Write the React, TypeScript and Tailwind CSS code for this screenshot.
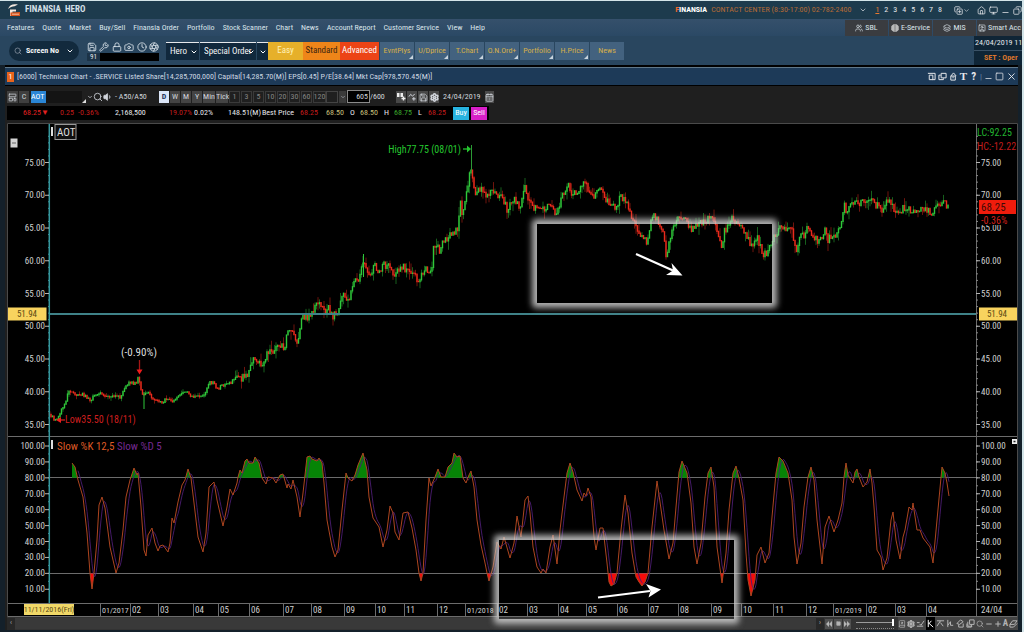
import type { ReactNode } from "react";
import {
  Aperture, BookUser, CalendarDays, Camera, ChevronDown, Clock, Copy, CopyPlus, House, Layers,
  LayoutTemplate, Lock, Minus, Monitor, Plus, Save, Search, Settings, Square, SquareUser, Users, Volume1, Wrench, X,
} from "lucide-react";

type Point = [number, number];

const toPoints = (flat: number[]): Point[] => {
  const out: Point[] = [];
  for (let i = 0; i < flat.length; i += 2) out.push([flat[i], flat[i + 1]]);
  return out;
};

const sample = (pts: Point[], x: number) => {
  let i = 1;
  while (i < pts.length - 1 && pts[i][0] < x) i++;
  const [x0, y0] = pts[i - 1];
  const [x1, y1] = pts[i];
  const t = Math.min(1, Math.max(0, (x - x0) / (x1 - x0)));
  return y0 + (y1 - y0) * t;
};

const pricePath = toPoints([
  49, 411, 51, 416, 53, 417, 57, 421, 59, 416, 62, 410, 67, 400, 69, 389, 72, 392, 78, 396, 83, 394, 91, 400, 95, 396,
  100, 393, 107, 397, 121, 397, 125, 388, 130, 383, 137, 383, 139, 377, 141, 387, 143, 394, 145, 396, 148, 392, 153, 399,
  163, 403, 167, 398, 172, 402, 177, 398, 183, 392, 188, 391, 193, 397, 200, 397, 207, 392, 210, 382, 215, 383, 218, 389,
  227, 383, 232, 383, 235, 379, 245, 377, 250, 372, 254, 359, 258, 365, 266, 364, 268, 350, 273, 352, 280, 345, 286, 348,
  288, 330, 293, 332, 298, 342, 303, 317, 310, 317, 319, 300, 323, 308, 327, 313, 329, 307, 333, 318, 337, 311, 340, 312,
  342, 295, 350, 298, 355, 283, 361, 277, 363, 257, 365, 264, 368, 273, 373, 273, 375, 265, 380, 272, 384, 265, 392, 267,
  395, 275, 404, 265, 408, 273, 413, 271, 418, 281, 423, 276, 427, 267, 432, 275, 434, 250, 437, 245, 441, 253, 443, 242,
  448, 240, 453, 233, 459, 229, 461, 203, 463, 215, 467, 192, 469, 183, 471, 168, 473, 177, 476, 198, 479, 188, 487, 194,
  493, 192, 500, 196, 505, 202, 508, 211, 513, 198, 518, 202, 521, 210, 525, 183, 528, 197, 535, 208, 547, 208, 549, 205,
  555, 212, 557, 217, 562, 200, 568, 183, 572, 195, 578, 192, 585, 184, 589, 188, 594, 197, 599, 186, 603, 193, 610, 203,
  616, 208, 622, 196, 627, 203, 633, 217, 638, 228, 647, 243, 653, 217, 657, 217, 660, 228, 664, 230, 666, 252, 668, 255,
  670, 240, 675, 223, 680, 217, 687, 222, 694, 230, 702, 222, 713, 217, 718, 230, 722, 250, 725, 232, 733, 217, 740, 227,
  747, 235, 753, 247, 758, 237, 763, 253, 767, 255, 772, 242, 777, 233, 782, 225, 787, 228, 792, 228, 795, 240, 797, 252,
  800, 238, 805, 235, 808, 223, 813, 235, 820, 243, 826, 228, 828, 242, 832, 235, 838, 235, 842, 222, 845, 205, 848, 215,
  852, 203, 860, 205, 865, 200, 872, 197, 877, 208, 880, 202, 883, 213, 886, 203, 891, 202, 895, 210, 898, 215, 903, 209,
  908, 208, 909, 203, 912, 213, 917, 209, 927, 211, 933, 213, 937, 208, 943, 202, 948, 206,
]);

const slowK = toPoints([
  72, 463, 75, 467, 78, 480, 83, 497, 87, 533, 90, 573, 92, 589, 94, 573, 97, 540, 99, 505, 102, 497, 105, 508, 110, 547,
  116, 573, 119, 563, 123, 530, 126, 497, 130, 480, 134, 468, 137, 475, 138, 473, 141, 507, 144, 550, 146, 556, 148, 535,
  152, 528, 155, 543, 158, 551, 160, 546, 163, 545, 168, 552, 170, 543, 172, 518, 174, 523, 178, 502, 182, 485, 185, 480,
  188, 469, 191, 478, 194, 503, 198, 537, 203, 552, 206, 533, 209, 487, 214, 482, 217, 500, 223, 526, 227, 507, 230, 489,
  233, 495, 237, 483, 238, 477, 240, 470, 242, 473, 245, 461, 247, 459, 249, 463, 253, 463, 255, 457, 259, 463, 262, 478,
  266, 484, 268, 477, 273, 478, 276, 483, 280, 475, 283, 474, 287, 488, 288, 484, 291, 489, 293, 480, 297, 497, 300, 517,
  303, 493, 307, 457, 310, 456, 312, 459, 317, 461, 319, 458, 322, 463, 324, 483, 327, 520, 332, 547, 335, 557, 338, 550,
  342, 510, 346, 473, 348, 478, 352, 481, 355, 475, 358, 465, 363, 453, 367, 470, 369, 497, 373, 518, 379, 527, 383, 547,
  387, 530, 390, 506, 393, 513, 395, 532, 399, 540, 403, 513, 408, 512, 412, 528, 416, 550, 419, 573, 421, 581, 423, 573,
  426, 520, 429, 478, 431, 486, 435, 477, 438, 469, 441, 477, 445, 477, 448, 467, 452, 463, 454, 453, 457, 457, 460, 456,
  463, 478, 466, 483, 469, 475, 471, 471, 474, 487, 477, 520, 481, 545, 485, 563, 487, 573, 489, 581, 493, 567, 497, 542,
  501, 549, 504, 537, 510, 558, 514, 543, 517, 516, 521, 537, 525, 500, 528, 496, 530, 513, 533, 547, 537, 567, 541, 573,
  543, 569, 546, 573, 550, 547, 553, 535, 557, 564, 560, 530, 564, 497, 567, 473, 570, 463, 573, 472, 577, 490, 582, 501,
  584, 493, 586, 496, 588, 488, 591, 497, 594, 537, 596, 550, 600, 528, 603, 528, 607, 563, 609, 582, 611, 586, 614, 584,
  617, 573, 621, 530, 625, 495, 628, 513, 632, 553, 636, 577, 639, 582, 642, 586, 645, 582, 648, 573, 652, 527, 657, 481,
  660, 502, 664, 530, 669, 559, 673, 543, 676, 507, 679, 472, 682, 461, 687, 473, 691, 503, 694, 547, 697, 564, 701, 543,
  705, 497, 708, 473, 711, 467, 714, 487, 717, 547, 722, 583, 726, 553, 729, 510, 733, 473, 736, 466, 739, 478, 743, 500,
  746, 553, 748, 580, 751, 596, 755, 580, 757, 555, 761, 547, 765, 563, 769, 553, 772, 517, 776, 473, 779, 457, 783, 461,
  788, 473, 792, 500, 794, 537, 797, 564, 801, 543, 804, 507, 808, 477, 811, 467, 814, 480, 817, 520, 822, 564, 825, 527,
  829, 516, 834, 532, 838, 520, 842, 503, 844, 477, 846, 463, 848, 475, 853, 483, 855, 472, 857, 469, 859, 477, 863, 487,
  867, 482, 870, 469, 872, 483, 874, 507, 877, 550, 881, 557, 883, 570, 887, 558, 891, 520, 893, 512, 896, 540, 900, 559,
  903, 537, 905, 530, 909, 507, 912, 510, 913, 503, 917, 530, 920, 530, 923, 538, 930, 547, 933, 563, 937, 520, 942, 467,
  945, 473, 947, 483, 949, 496,
]);

// %D trails %K as a simple moving average
const slowD: Point[] = [];
for (let x = 78; x <= 949; x += 1) {
  let sum = 0;
  for (let k = 0; k < 6; k++) sum += sample(slowK, x - k);
  slowD.push([x, sum / 6]);
}

const noise = (i: number) => {
  const v = Math.sin(i * 127.1 + 11.7) * 43758.5453;
  return v - Math.floor(v);
};

const candles = Array.from({ length: 600 }, (_, i) => {
  const x = 49.5 + i * 1.5;
  const wobble = x > 235 ? 7 : 3;
  const open = sample(pricePath, x - 0.75) + (noise(i) - 0.5) * wobble;
  const close = sample(pricePath, x + 0.75) + (noise(i + 1) - 0.5) * wobble;
  const top = Math.min(open, close);
  const bottom = Math.max(open, close);
  return {
    x,
    up: close <= open,
    top: top - 0.6,
    bottom: bottom + 0.6,
    high: top - noise(i + 900) ** 3 * wobble * 1.3,
    low: bottom + noise(i + 1900) ** 3 * wobble * 1.3,
  };
});

const prices = [75, 70, 65, 60, 55, 50, 45, 40, 35];
const levels = [100, 90, 80, 70, 60, 50, 40, 30, 20, 10];
const priceY = (p: number) => 162.5 + (75 - p) * 6.55;
const levelY = (l: number) => 446 + (100 - l) * 1.592;

const months: [number, string][] = [
  [100, "01/2017"], [130, "02"], [158, "03"], [193, "04"], [218, "05"], [249, "06"], [283, "07"], [311, "08"],
  [344, "09"], [375, "10"], [404, "11"], [437, "12"], [465, "01/2018"], [497, "02"], [527, "03"], [558, "04"],
  [586, "05"], [617, "06"], [648, "07"], [678, "08"], [711, "09"], [741, "10"], [773, "11"], [806, "12"],
  [833, "01/2019"], [866, "02"], [895, "03"], [926, "04"],
];

const menuItems = [
  "Features", "Quote", "Market", "Buy/Sell", "Finansia Order", "Portfolio", "Stock Scanner", "Chart", "News",
  "Account Report", "Customer Service", "View", "Help",
];
const shortcuts = ["EvntPlys", "U/Dprice", "T.Chart", "O.N.Ord+", "Portfolio", "H.Price", "News"];
const periods = ["D", "W", "M", "Y", "Min", "Tick"];
const intervals = ["1", "3", "5", "10", "20", "30", "60", "120"];

function IconButton({ label, className = "", children }: { label: string; className?: string; children: ReactNode }) {
  return (
    <button type="button" aria-label={label} className={`flex shrink-0 items-center justify-center ${className}`}>
      {children}
    </button>
  );
}

// small line glyphs on a 10x10 grid
function Glyph({ d }: { d: string }) {
  return (
    <svg viewBox="0 0 10 10" className="h-[9px] w-[9px]" fill="none" stroke="currentColor" strokeWidth="1.1" aria-hidden>
      <path d={d} />
    </svg>
  );
}

function Ticks({ x1, x2 }: { x1: number; x2: number }) {
  return (
    <g stroke="#b4b4b4" strokeWidth="1">
      {prices.map((p) => <line key={p} x1={x1} x2={x2} y1={priceY(p)} y2={priceY(p)} />)}
      {levels.map((l) => <line key={l} x1={x1} x2={x2} y1={levelY(l)} y2={levelY(l)} />)}
    </g>
  );
}

function MinorTicks({ x, color }: { x: number; color: string }) {
  return (
    <g stroke={color} strokeWidth="1">
      {Array.from({ length: 46 }, (_, i) => <line key={i} x1={x} x2={x + 2} y1={priceY(79 - i)} y2={priceY(79 - i)} />)}
      {Array.from({ length: 19 }, (_, i) => <line key={i} x1={x} x2={x + 2} y1={levelY(100 - i * 5)} y2={levelY(100 - i * 5)} />)}
    </g>
  );
}

function Highlight({ id, x, y, width, height }: { id: string; x: number; y: number; width: number; height: number }) {
  return (
    <g>
      <mask id={id} maskUnits="userSpaceOnUse" x={x - 30} y={y - 30} width={width + 60} height={height + 60}>
        <rect x={x - 30} y={y - 30} width={width + 60} height={height + 60} fill="#fff" />
        <rect x={x} y={y} width={width} height={height} fill="#000" />
      </mask>
      <g mask={`url(#${id})`}>
        <rect
          x={x - 5} y={y - 5} width={width + 10} height={height + 10} rx="4"
          fill="#d0d0d0" fillOpacity="0.85" filter="url(#glow)"
        />
      </g>
    </g>
  );
}

function Chart() {
  const kLine = slowK.map((p) => p.join(",")).join(" ");
  const dLine = slowD.map((p) => p.join(",")).join(" ");
  return (
    <svg
      viewBox="7 123 1011 494"
      className="pointer-events-none relative z-10 block h-auto w-full overflow-visible font-['Roboto_Condensed','Liberation_Sans',sans-serif]"
      role="img"
      aria-label="AOT price chart"
    >
      <defs>
        <filter id="glow" x="-20%" y="-40%" width="140%" height="180%">
          <feGaussianBlur stdDeviation="3.2" />
        </filter>
        <clipPath id="overbought"><rect x="50" y="438" width="926" height="39.8" /></clipPath>
        <clipPath id="oversold"><rect x="50" y="573.4" width="926" height="28" /></clipPath>
      </defs>
      <rect x="7" y="123" width="1011" height="494" fill="#000" />
      <path d="M7.500 617V123.500H1017.500V617" fill="none" stroke="#4a4a4a" />
      <g stroke="#6c6c6c">
        <line x1="8" x2="1017" y1="436.500" y2="436.500" />
        <line x1="8" x2="1017" y1="603.500" y2="603.500" />
        <line x1="8" x2="1017" y1="616.500" y2="616.500" />
        <line x1="50" x2="976" y1="477.500" y2="477.500" />
        <line x1="50" x2="976" y1="573.500" y2="573.500" />
        <line x1="976.500" x2="976.500" y1="124" y2="616" />
        {months.map(([x]) => <line key={x} x1={x + 0.5} x2={x + 0.5} y1="603" y2="616" />)}
      </g>

      {/* price series */}
      {candles.map((c) => (
        <g key={c.x} stroke={c.up ? "#2fc83a" : "#ea2a1c"}>
          <line x1={c.x} x2={c.x} y1={c.high} y2={c.low} strokeWidth="0.8" strokeOpacity="0.6" />
          <line x1={c.x} x2={c.x} y1={c.top} y2={c.bottom} strokeWidth="1.4" />
        </g>
      ))}
      <line x1="471.500" x2="471.500" y1="145" y2="170" stroke="#2b9a35" />
      <line x1="144" x2="144" y1="392" y2="409" stroke="#2fc83a" />
      <line x1="363.500" x2="363.500" y1="254" y2="277" stroke="#2fc83a" />
      <line x1="50" x2="976" y1="314" y2="314" stroke="#3f8288" strokeWidth="2" />
      <line x1="49.300" x2="49.300" y1="124" y2="603" stroke="#35969c" strokeWidth="1.500" />
      <MinorTicks x={48} color="#35969c" />
      <MinorTicks x={976} color="#888" />
      <Ticks x1={45} x2={49} />
      <Ticks x1={976} x2={980} />

      {/* oscillator */}
      <polygon points={`72,478 ${kLine} 949,478`} fill="#068406" clipPath="url(#overbought)" />
      <polygon points={`72,573 ${kLine} 949,573`} fill="#f60a0a" clipPath="url(#oversold)" />
      <polyline points={dLine} fill="none" stroke="#4c1d72" strokeWidth="0.9" />
      <polyline points={kLine} fill="none" stroke="#ad451f" strokeWidth="1" />

      {/* axis values */}
      <g fill="#d0d0d0" fontSize="9">
        {prices.map((p) => (
          <g key={p}>
            <text x="45" y={priceY(p) + 3} textAnchor="end">{p.toFixed(2)}</text>
            <text x="981" y={priceY(p) + 3}>{p.toFixed(2)}</text>
          </g>
        ))}
        {levels.map((l) => (
          <g key={l}>
            <text x="45" y={levelY(l) + 3} textAnchor="end">{l.toFixed(2)}</text>
            <text x="981" y={levelY(l) + 3}>{l.toFixed(2)}</text>
          </g>
        ))}
        {months.map(([x, label]) => <text key={x} x={x + 2} y="613" fontSize={label.length > 2 ? 8 : 9}>{label}</text>)}
        <text x="981" y="613">24/04</text>
      </g>
      <rect x="8" y="307.500" width="38.500" height="13" fill="#f8d35e" />
      <rect x="979" y="307.500" width="38" height="13" fill="#f8d35e" />
      <rect x="24" y="604" width="50" height="11" fill="#f1d868" />
      <g fill="#5a4a14" fontSize="9" textAnchor="middle">
        <text x="27" y="317">51.94</text>
        <text x="997" y="317">51.94</text>
        <text x="49" y="612" fontSize="8">11/11/2016(Fri)</text>
      </g>
      <rect x="979" y="200" width="37" height="14" fill="#f01c0c" />
      <rect x="979" y="215" width="37" height="10" fill="#000" />
      <g fontSize="11">
        <text x="981" y="211" fill="#3c0a06">68.25</text>
        <text x="981" y="224" fontSize="10" fill="#d0201a">-0.36%</text>
        <text x="977" y="136" fontSize="10" fill="#22b530">LC:92.25</text>
        <text x="977" y="150" fontSize="10" fill="#c01c1c">HC:-12.22</text>
        <rect x="55" y="124.500" width="21" height="15" fill="#101010" stroke="#999" />
        <text x="57" y="136" fill="#ddd">AOT</text>
        <text x="461" y="153" fontSize="10" fill="#25c72f" textAnchor="end">High77.75 (08/01)</text>
        <text x="139" y="356" fill="#ddd" textAnchor="middle">(-0.90%)</text>
        <text x="65" y="423" fontSize="10" fill="#cf1f1f">Low35.50 (18/11)</text>
        <text x="57" y="450" fill="#dd5a26">Slow %K 12,5</text>
        <text x="117" y="450" fill="#752a92">Slow %D 5</text>
      </g>
      <rect x="51" y="127" width="2" height="9" fill="#ddd" />
      <rect x="51" y="440" width="2" height="9" fill="#ddd" />
      <rect x="10.500" y="138.500" width="7" height="9" fill="#d4d4d4" />
      <path d="M12 143h4" stroke="#666" />
      <rect x="1012" y="439" width="5" height="5" fill="#eee" />
      <path d="M1013.500 441.500h2" stroke="#222" strokeWidth="1.500" />
      <path d="M463 149h4" stroke="#25c72f" strokeWidth="1.300" />
      <path d="M467 145.500l4 3.500-4 3.500z" fill="#25c72f" />
      <path d="M139.500 360v11" stroke="#a51616" strokeWidth="1.300" />
      <path d="M136.500 369.500h6l-3 5z" fill="#ee1c1c" />
      <path d="M60 420h5" stroke="#cf1f1f" strokeWidth="1.300" />
      <path d="M56 420l5-3v6z" fill="#ee1c1c" />

      <Highlight id="upper-box" x={537} y={224} width={235} height={79} />
      <Highlight id="lower-box" x={499} y={540} width={235} height={79} />
      <path d="M636 254L673 270.500" stroke="#fff" strokeWidth="2.200" />
      <path d="M671.500 263L682.500 275.500L666 275L673 270.500Z" fill="#fff" />
      <path d="M598 597.500L650 591" stroke="#fff" strokeWidth="2.200" />
      <path d="M646 584L661 589.500L648.500 597.500L650.500 591Z" fill="#fff" />
    </svg>
  );
}

function TitleBar() {
  return (
    <header className="flex h-[18px] items-center bg-[#1d3b4d] pl-[7px]">
      <svg viewBox="0 0 14 14" className="h-[14px] w-[14px]" aria-hidden>
        <path d="M1 6C3 1.500 6 .6 11 1.600L7.500 3.200C5 3.200 3.500 4.200 1 6Z" fill="#f3e8e0" />
        <path d="M3 6.500H9V8.500H5.500V13H3Z" fill="#f3e8e0" />
        <path d="M3.500 9.500L13 9V13H3.500Z" fill="#d9541c" />
        <path d="M5 11.200h7" stroke="#f7d8c4" strokeWidth=".8" />
      </svg>
      <h1 className="ml-1 flex-1 text-[9px] font-bold text-[#d3dfe5]">FINANSIA&nbsp; HERO</h1>
      <div className="flex items-center text-[8px]">
        <span className="font-bold text-white"><span className="text-[#ef6a2c]">F</span>INANSIA</span>
        <span className="ml-1 text-[#b56a35]">CONTACT CENTER (8:30-17:00) 02-782-2400</span>
        <IconButton label="Contacts" className="mx-2"><ChevronDown size={8} className="text-gray-200" /></IconButton>
        <div className="flex gap-[5px] text-gray-200">
          <a href="#1" className="text-[#e8792e] underline">1</a>
          {["2", "3", "4", "5", "6", "7", "8"].map((n) => <a key={n} href={`#${n}`}>{n}</a>)}
        </div>
        <div className="ml-3 flex items-center gap-[3px] text-gray-200">
          <IconButton label="Windows"><CopyPlus size={9} /><ChevronDown size={7} /></IconButton>
          <IconButton label="Home" className="ml-1"><House size={9} /></IconButton>
          <IconButton label="Display"><Monitor size={9} /></IconButton>
          <IconButton label="Minimize" className="pt-1"><Minus size={9} /></IconButton>
          <IconButton label="Restore"><Copy size={9} className="-scale-x-100" /></IconButton>
        </div>
      </div>
    </header>
  );
}

function MenuBar() {
  const links = [
    { label: "SBL", icon: <Users size={8} /> },
    {
      label: "E-Service",
      icon: (
        <svg viewBox="0 0 8 8" className="h-2 w-2" fill="none" stroke="#555" strokeWidth=".6" aria-hidden>
          <circle cx="4" cy="4" r="3.8" fill="#e4e4e4" stroke="none" />
          <path d="M0 4h8M4 0v8M1 2h6M1 6h6" />
        </svg>
      ),
    },
    { label: "MIS", icon: <Layers size={8} /> },
    { label: "Smart Acc", icon: <SquareUser size={8} /> },
  ];
  return (
    <nav className="flex h-[17px] items-center justify-between bg-linear-to-b from-[#35506b] to-[#2b4965] pl-[7px] text-[8px] text-[#dbe4ea]">
      <div className="flex gap-2">
        {menuItems.map((m) => <a key={m} href="#menu">{m}</a>)}
      </div>
      <div className="flex h-full gap-px pt-px">
        {links.map((l) => (
          <a key={l.label} href="#link" className="flex w-[43px] items-center justify-center gap-[2px] bg-[#3a3c40] last:w-[45px]">
            {l.icon}{l.label}
          </a>
        ))}
      </div>
    </nav>
  );
}

function DropDown({ label, className }: { label: string; className: string }) {
  return (
    <div className={`relative flex h-[18px] items-center border-t border-gray-200 bg-[#11283c] ${className}`}>
      <select aria-label={label || "More orders"} className="h-4 w-full appearance-none bg-transparent py-0 pl-1 text-[9px] leading-4 text-gray-100">
        <option>{label}</option>
      </select>
      <ChevronDown size={8} strokeWidth={3} className="pointer-events-none absolute right-px top-[5px] text-white" />
    </div>
  );
}

function ToolBar() {
  return (
    <div className="flex h-[29px] items-center bg-[#29465f] pl-[9px]">
      <button type="button" className="flex h-5 w-[70px] items-center rounded-full bg-[#122a3d] px-[5px] text-[8px] font-bold text-gray-100">
        <Search size={8} className="mr-1 text-gray-400" />
        <span className="flex-1 text-left">Screen No</span>
        <ChevronDown size={8} strokeWidth={3} />
      </button>
      <div className="ml-2 w-[72px]">
        <div className="flex h-3 items-center justify-between text-[#dfe7ee]">
          <IconButton label="Save"><Save size={10} /></IconButton>
          <IconButton label="Settings"><Wrench size={10} /></IconButton>
          <IconButton label="Lock"><Lock size={10} /></IconButton>
          <IconButton label="Capture"><Camera size={10} /></IconButton>
          <IconButton label="Clock"><Clock size={10} /></IconButton>
          <IconButton label="Options"><Aperture size={10} /></IconButton>
        </div>
        <div className="flex h-2 bg-black text-[7px] leading-[8px] text-gray-200">
          <span className="w-[13px] bg-[#1c3347] text-center">91</span>
        </div>
      </div>
      <div className="ml-[7px] flex items-center gap-px">
        <DropDown label="Hero" className="w-[33px]" />
        <DropDown label="Special Order" className="w-[56px]" />
        <DropDown label="" className="w-[11px]" />
      </div>
      <div className="flex h-[18px] text-[9px]">
        <button type="button" className="w-[35px] bg-[#e6b02a] text-[#fff0b8]">Easy</button>
        <button type="button" className="w-[37px] bg-[#ee8519] text-[#3a2410]">Standard</button>
        <button type="button" className="w-[39px] bg-[#ec4416] text-white">Advanced</button>
      </div>
      <div className="flex h-[18px] gap-px pl-px text-[8px]">
        {shortcuts.map((s) => (
          <button key={s} type="button" className="group relative w-[34px] bg-[#43627f] text-[#d6b04a]">
            {s}
            <svg viewBox="0 0 4 4" className="absolute bottom-px right-px h-1 w-1 group-last:hidden" aria-hidden>
              <path d="M4 0V4H0Z" fill="#c9d4de" />
            </svg>
          </button>
        ))}
      </div>
      <div className="ml-auto flex h-full w-[48px] flex-col overflow-hidden whitespace-nowrap bg-[#0f2536] text-[8px] leading-[14px]">
        <span className="h-[15px] border-b border-[#3b5266] pl-px text-gray-200">24/04/2019 11:</span>
        <span className="pl-[10px] font-bold text-[#d9742c]">SET : Oper</span>
      </div>
    </div>
  );
}

function ChartControls() {
  return (
    <div className="flex h-[17px] items-end text-[8px] text-gray-300">
      <IconButton label="Layout" className="h-3 w-[11px] bg-[#3f3f3f]"><LayoutTemplate size={9} /></IconButton>
      <button type="button" className="ml-px h-3 w-[10px] bg-[#3f3f3f] leading-3">C</button>
      <form className="ml-[2px] flex items-end">
        <div className="flex h-3 w-[51px] items-center bg-[#141414]">
          <input aria-label="Symbol" defaultValue="AOT" size={3} className="h-3 w-[15px] bg-[#2a86d6] text-[8px] text-white" />
        </div>
      </form>
      <svg viewBox="0 0 4 4" className="h-1 w-1" aria-hidden><path d="M4 0V4H0Z" fill="#ddd" /></svg>
      <IconButton label="History" className="ml-px h-3"><ChevronDown size={6} strokeWidth={3} /></IconButton>
      <IconButton label="Search" className="h-3"><Search size={10} /></IconButton>
      <IconButton label="Sound" className="h-3"><Volume1 size={10} fill="currentColor" /></IconButton>
      <span className="ml-[2px] w-[44px] leading-3">- A50/A50</span>
      <div className="flex gap-px leading-3">
        {periods.map((p, i) => (
          <button
            key={p}
            type="button"
            className={i === 0 ? "h-3 w-[10px] bg-[#dbe6f8] font-bold text-[#23345c]" : i < 4 ? "h-3 w-[10px] bg-[#444]" : "h-3 w-3 bg-[#444]"}
          >
            {p}
          </button>
        ))}
        {intervals.map((n) => (
          <button key={n} type="button" className="h-3 w-[11px] border border-[#3a3a3a] leading-[10px] text-[#858585] nth-[14]:w-[13px]">
            <span className="flex justify-center">{n}</span>
          </button>
        ))}
      </div>
      <div className="h-3 w-[12px] border border-[#444]" />
      <IconButton label="Interval" className="ml-px h-3 w-[7px] bg-[#3a3a3a]"><ChevronDown size={6} /></IconButton>
      <input aria-label="Bars" defaultValue="605" className="ml-px h-[13px] w-[23px] border border-[#8a8a8a] bg-black pr-px text-right text-[8px]" />
      <span className="w-[26px] leading-3">/600</span>
      <div className="flex gap-px">
        <IconButton label="Compare" className="h-3 w-[10px] bg-[#484848]">
          <svg viewBox="0 0 10 10" className="h-[10px] w-[10px]" aria-hidden>
            <path d="M1 1h2.500v4H1zM4.500 1H7v4H4.500z" fill="#eee" />
            <path d="M7.500 4.500v4M5.500 6.500h4" stroke="#eee" strokeWidth="1.400" />
          </svg>
        </IconButton>
        <IconButton label="Indicator" className="h-3 w-[10px] bg-[#484848]"><Glyph d="M1 4L3 1.500L5 3.500L7.500 1M6.500 4.500v4M4.500 6.500h4" /></IconButton>
        <IconButton label="Save chart" className="h-3 w-[10px] bg-[#484848]"><Save size={9} /></IconButton>
        <IconButton label="Chart settings" className="h-3 w-[10px] bg-[#484848]"><Settings size={9} strokeWidth={4} /></IconButton>
      </div>
      <span className="ml-1 leading-3">24/04/2019</span>
      <IconButton label="Pick date" className="ml-1 h-3 w-[9px] bg-[#4a4a4a]"><CalendarDays size={9} /></IconButton>
    </div>
  );
}

function QuoteStrip() {
  return (
    <div className="mt-[3px] flex h-[14px] w-[482px] items-center bg-black text-[8px] text-gray-200">
      <span className="w-[53px] pl-4 text-[#e22020]">68.25▼</span>
      <span className="w-[18px] text-[#c41c1c]">0.25</span>
      <span className="w-[37px] text-[#c41c1c]">-0.36%</span>
      <span className="w-[54px]">2,168,500</span>
      <span className="w-[25px] text-[#c41c1c]">19.07%</span>
      <span className="w-[34px]">0.02%</span>
      <span className="w-[34px]">148.51(M)</span>
      <span className="w-[38px]">Best Price</span>
      <span className="w-[26px] text-[#c41c1c]">68.25</span>
      <span className="w-[24px] text-[#c9c07c]">68.50</span>
      <span className="w-[10px]">O</span>
      <span className="w-[24px] text-[#c9c07c]">68.50</span>
      <span className="w-[10px]">H</span>
      <span className="w-[24px] text-[#3aa82c]">68.75</span>
      <span className="w-[10px]">L</span>
      <span className="w-[25px] text-[#c41c1c]">68.25</span>
      <button type="button" className="h-[13px] w-4 shrink-0 bg-[#27b3e0] text-white">Buy</button>
      <button type="button" className="ml-[2px] h-[13px] w-4 shrink-0 bg-[#d81fc8] text-white">Sell</button>
    </div>
  );
}

function BottomBar() {
  return (
    <footer className="flex h-[13px] items-center bg-[#333] text-[#b4b4b4]">
      <IconButton label="Scroll left" className="h-3 w-2 bg-[#282828] text-[7px]">‹</IconButton>
      <div className="h-[11px] flex-1 bg-[#393939]" />
      <IconButton label="Scroll right" className="h-3 w-2 bg-[#282828] text-[7px]">›</IconButton>
      <div className="flex gap-px px-px">
        <IconButton label="Rewind" className="h-[10px] w-2 bg-[#505050]">
          <svg viewBox="0 0 8 8" className="h-[6px] w-[6px]" fill="currentColor"><path d="M4 0V8L0 4ZM8 0V8L4 4Z" /></svg>
        </IconButton>
        <IconButton label="Stop" className="h-[10px] w-2 bg-[#505050]">
          <Square size={5} fill="currentColor" />
        </IconButton>
        <IconButton label="Forward" className="h-[10px] w-2 bg-[#505050]">
          <svg viewBox="0 0 8 8" className="h-[6px] w-[6px]" fill="currentColor"><path d="M4 0V8L8 4ZM0 0V8L4 4Z" /></svg>
        </IconButton>
      </div>
      <div className="relative ml-1 h-[11px] w-[38px] border-b border-dotted border-[#888]">
        <input
          type="range"
          aria-label="Zoom"
          defaultValue={100}
          className="block h-[8px] w-full appearance-none bg-[linear-gradient(#9a9a9a,#9a9a9a)] bg-[length:100%_1px] bg-center bg-no-repeat [&::-webkit-slider-thumb]:h-[7px] [&::-webkit-slider-thumb]:w-[2px] [&::-webkit-slider-thumb]:appearance-none [&::-webkit-slider-thumb]:bg-white"
        />
      </div>
      <div className="ml-1 flex w-[120px] items-center justify-between bg-[#444]">
        <IconButton label="Notes"><BookUser size={8} /></IconButton>
        <IconButton label="Preferences"><Settings size={8} strokeWidth={4} /></IconButton>
        <IconButton label="Edit"><Glyph d="M1 4h3M1 8h7M4 5.500L5.500 7L9 2" /></IconButton>
        <IconButton label="Select" className="h-[13px] bg-black text-white"><Glyph d="M2.500 1v8M3 5.500L6 2M3 4.500L8 9" /></IconButton>
        <IconButton label="Trend line"><Glyph d="M1 2h8M5 2L1 8M5 4L8 8" /></IconButton>
        <IconButton label="Angle"><Glyph d="M2 1v8M2 7L5 3M5 3v4h3" /></IconButton>
        <IconButton label="Shapes"><Glyph d="M1 5L5 1L8 3L4 6ZM3 6v3h5V5" /></IconButton>
        <IconButton label="Panels"><Glyph d="M4 1h5v5h-5zM2 3v5h5M1 5v4h5V6" /></IconButton>
        <IconButton label="Find"><Search size={8} /></IconButton>
        <IconButton label="Zoom out"><Minus size={8} strokeWidth={3} /></IconButton>
        <IconButton label="Zoom in"><Plus size={8} strokeWidth={3} /></IconButton>
        <IconButton label="Text" className="text-[9px] font-bold leading-none">A</IconButton>
        <IconButton label="Erase"><Glyph d="M1 6L4 2h5L6 6ZM1 6v3h4L9 5" /></IconButton>
      </div>
    </footer>
  );
}

export default function App() {
  return (
    <div className="min-h-screen overflow-hidden whitespace-nowrap border-r-2 border-t border-[#d4e5e9] bg-[#14202a] font-['Roboto_Condensed','Liberation_Sans',sans-serif]">
      <TitleBar />
      <MenuBar />
      <ToolBar />
      <main className="ml-[5px] mr-1 border-t-2 border-black bg-[#1f1f1f]">
        <div className="flex h-[18px] items-center border-t border-[#60788a] bg-[#1d3a58] pl-[2px] pr-px text-[8px] text-[#cdd8e2]">
          <span className="mr-[3px] flex h-[10px] w-[7px] items-center justify-center bg-[#e8641c] text-[8px] text-white">1</span>
          <h2 className="flex-1">
            [6000] Technical Chart - .SERVICE Listed Share[14,285,700,000] Capital[14,285.70(M)] EPS[0.45] P/E[38.64] Mkt Cap[978,570.45(M)]
          </h2>
          <div className="flex items-center gap-[2px] text-gray-200">
            <IconButton label="Layout"><Glyph d="M1 1.500h8v7h-3M2.500 3.500h4v5h-4z" /></IconButton>
            <IconButton label="Duplicate"><Glyph d="M3.500 1.500h5.500v5h-5.500zM3 3.500H1v5h5V7" /></IconButton>
            <IconButton label="Lock window"><Glyph d="M2 4.500h5V9H2zM2 4.500L5 1L8 4.500M4.500 5v2" /></IconButton>
            <IconButton label="Font" className="font-['Liberation_Serif',serif] text-[11px] font-bold leading-none">T</IconButton>
            <IconButton label="Help" className="mx-[2px] text-[11px] font-bold leading-none">?</IconButton>
            <span className="text-[#6f8ba3]">|</span>
            <IconButton label="Minimize window" className="pt-1"><Minus size={9} /></IconButton>
            <IconButton label="Maximize window"><Square size={9} /></IconButton>
            <IconButton label="Close window"><X size={11} /></IconButton>
          </div>
        </div>
        <section className="border-t border-black pb-[3px] pl-[2px]">
          <ChartControls />
          <QuoteStrip />
        </section>
        <section className="pl-[2px]">
          <Chart />
          <BottomBar />
        </section>
      </main>
    </div>
  );
}
